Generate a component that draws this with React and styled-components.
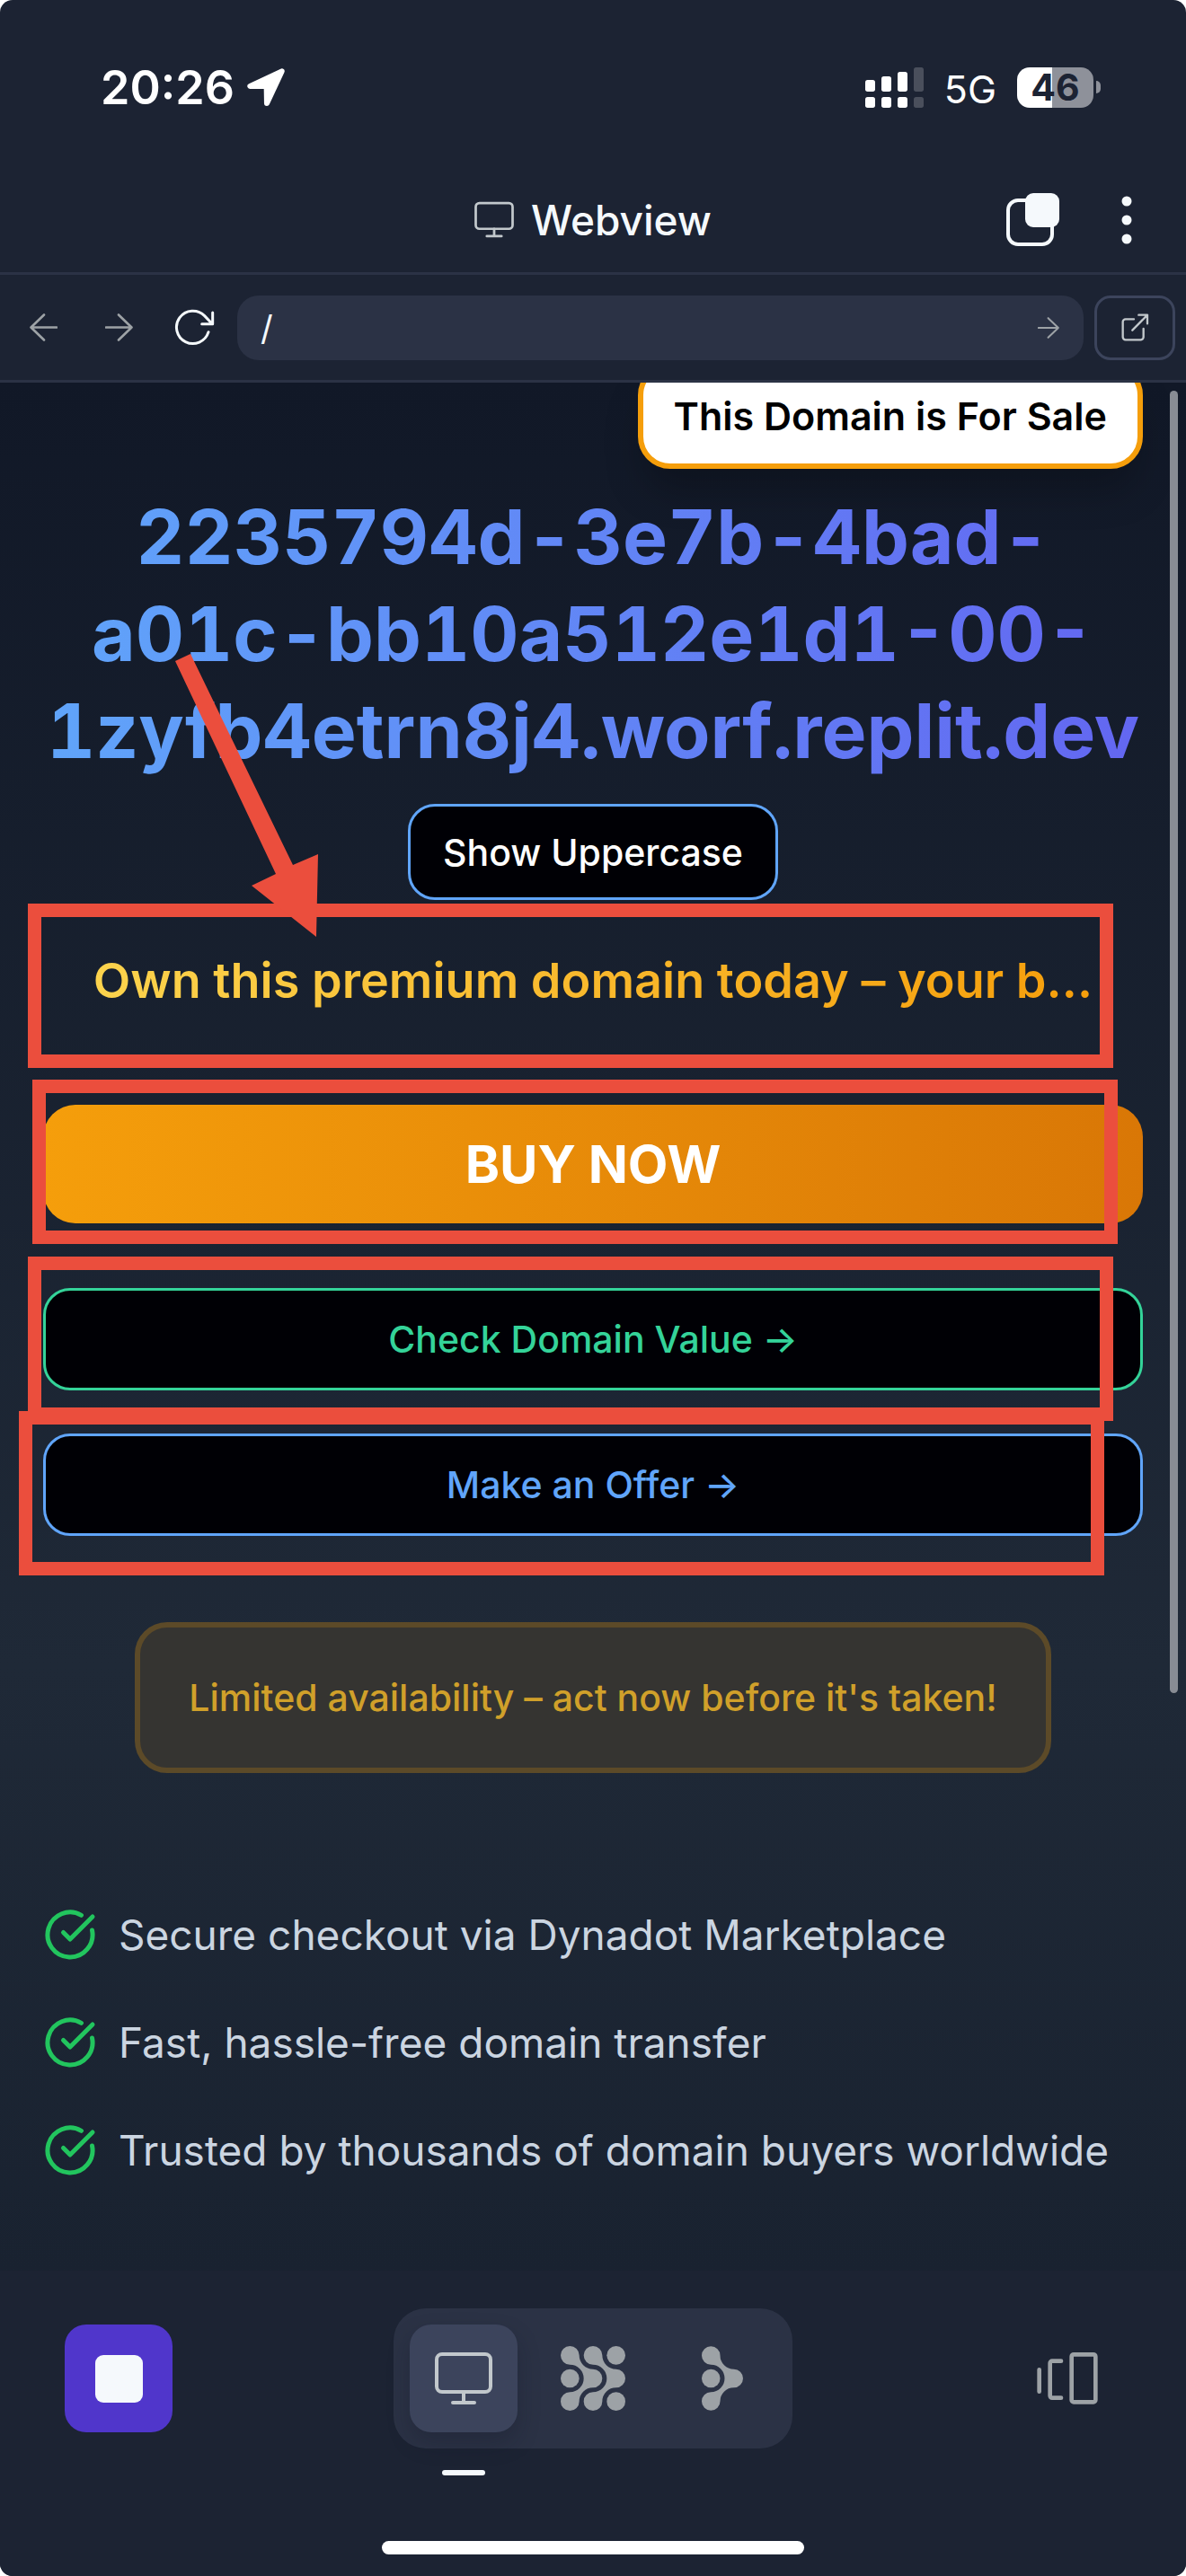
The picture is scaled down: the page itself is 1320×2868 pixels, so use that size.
import React from 'react';
import styled, { createGlobalStyle, css } from 'styled-components';
import { CircleCheckBig } from 'lucide-react';

const c = {
  chrome: '#1c2333',
  raised: '#2b3245',
  line: '#3c445c',
  icon: '#c2c8cc',
  muted: '#9da2a6',
  text: '#f5f9fc',
  blue: '#60a5fa',
  green: '#34d399',
  amber: '#f59e0b',
};

const GlobalStyle = createGlobalStyle`
  *, *::before, *::after { box-sizing: border-box; }
  body { margin: 0; background: #fff; font-family: Inter, Roboto, sans-serif; }
  button, input { font: inherit; }
  svg { display: block; flex: none; }
`;

const Screen = styled.div`
  min-height: 100vh;
  display: flex;
  flex-direction: column;
  background: ${c.chrome};
  color: ${c.text};
  border-radius: 14px;
  overflow: hidden;
`;

const StatusBar = styled.div`
  height: 186px;
  padding: 8px 95px 0 112px;
  display: flex;
  align-items: center;
  justify-content: space-between;
  color: #fff;
`;

const StatusGroup = styled.div`
  display: flex;
  align-items: center;
  gap: ${(p) => p.$gap}px;
`;

const Clock = styled.time`
  font-size: 52px;
  font-weight: 600;
`;

const Network = styled.span`
  font-size: 43px;
  font-weight: 400;
  padding-top: 4px;
`;

const Battery = styled.div`
  display: flex;
  align-items: center;
  gap: 3px;
`;

const BatteryBody = styled.span`
  width: 85px;
  height: 45px;
  border-radius: 14px;
  display: flex;
  align-items: center;
  justify-content: center;
  background: linear-gradient(90deg, #fff 46%, #8e919a 46%);
  color: ${c.chrome};
  font-size: 41px;
  font-weight: 700;
`;

const BatteryTip = styled.span`
  width: 5px;
  height: 14px;
  border-radius: 0 7px 7px 0;
  background: #8e919a;
`;

const IconButton = styled.button`
  border: 0;
  padding: 0;
  background: none;
  color: ${(p) => p.$color || c.text};
  width: ${(p) => p.$width}px;
  height: ${(p) => p.$height || 72}px;
  display: flex;
  align-items: center;
  justify-content: center;
`;

const TitleBar = styled.header`
  height: 120px;
  padding: 0 36px;
  display: grid;
  grid-template-columns: 1fr auto 1fr;
  align-items: center;
  border-bottom: 3px solid ${c.raised};
`;

const Title = styled.h1`
  grid-column: 2;
  margin: 0;
  display: flex;
  align-items: center;
  gap: 19px;
  font-size: 46px;
  font-weight: 500;
  svg { color: ${c.icon}; }
`;

const TitleActions = styled.div`
  display: flex;
  justify-content: flex-end;
  gap: 45px;
`;

const BrowserBar = styled.form`
  height: 120px;
  padding: 0 12px 0 6px;
  display: flex;
  align-items: center;
  border-bottom: 3px solid ${c.raised};
`;

const AddressBox = styled.div`
  flex: 1;
  height: 72px;
  margin: 0 12px 0 6px;
  padding: 0 3px 0 26px;
  display: flex;
  align-items: center;
  border-radius: 24px;
  background: ${c.raised};
`;

const AddressInput = styled.input`
  flex: 1;
  min-width: 0;
  padding: 0;
  border: 0;
  outline: 0;
  background: none;
  color: ${c.text};
  font-size: 38px;
`;

const OpenLink = styled.a`
  width: 90px;
  height: 72px;
  display: flex;
  align-items: center;
  justify-content: center;
  border: 3px solid ${c.line};
  border-radius: 18px;
  color: ${c.icon};
`;

const Page = styled.main`
  flex: 1;
  position: relative;
  overflow: hidden;
  padding: 0 48px 96px;
  display: flex;
  flex-direction: column;
  align-items: center;
  background: linear-gradient(180deg, #111827 0%, #1f2937 68%, #192230 100%);
`;

const SaleBadge = styled.div`
  align-self: flex-end;
  height: 118px;
  margin-top: -22px;
  padding: 0 34px;
  display: flex;
  align-items: center;
  border: 6px solid ${c.amber};
  border-radius: 36px;
  background: #fff;
  box-shadow: 0 30px 45px -9px rgba(0, 0, 0, 0.25);
  color: #000;
  font-size: 43px;
  font-weight: 600;
  white-space: nowrap;
`;

const Domain = styled.h2`
  align-self: stretch;
  margin: 22px -6px 27px;
  background: linear-gradient(90deg, ${c.blue}, #6366f1);
  background-clip: text;
  color: transparent;
  font-size: 84px;
  line-height: 108px;
  font-weight: 700;
  font-variant-numeric: tabular-nums;
  text-align: center;
  span { display: block; white-space: nowrap; }
`;

const actionTones = {
  outline: css`
    height: 114px;
    border: 3px solid ${(p) => p.$tone};
    border-radius: 30px;
    background: #000005;
    color: ${(p) => p.$text || p.$tone};
    font-size: 41px;
    font-weight: 500;
  `,
  primary: css`
    height: 132px;
    border: 0;
    border-radius: 36px;
    background: linear-gradient(90deg, ${c.amber}, #d97706);
    color: #fff;
    font-size: 58px;
    font-weight: 700;
  `,
};

const Action = styled.button`
  width: 100%;
  padding: 0;
  ${(p) => actionTones[p.$kind]}
`;

const CaseToggle = styled(Action)`
  width: auto;
  height: 107px;
  padding: 0 36px;
`;

const Actions = styled.div`
  width: 100%;
  margin-top: 102px;
  display: flex;
  flex-direction: column;
  gap: 48px;
  & > :first-child { margin-bottom: 24px; }
`;

const Slogan = styled.p`
  margin: 54px 0 0;
  background: linear-gradient(90deg, #fcd34d, ${c.amber});
  background-clip: text;
  color: transparent;
  font-size: 54px;
  line-height: 72px;
  font-weight: 600;
  white-space: nowrap;
`;

const Notice = styled.p`
  height: 168px;
  margin: 96px 0 150px;
  padding: 0 54px;
  display: flex;
  align-items: center;
  border: 6px solid #5c4a28;
  border-radius: 36px;
  background: #353431;
  color: #d0a02a;
  font-size: 41px;
  font-weight: 500;
  white-space: nowrap;
`;

const Benefits = styled.ul`
  align-self: stretch;
  margin: 0;
  padding: 0;
  list-style: none;
  display: flex;
  flex-direction: column;
  gap: 60px;
`;

const Benefit = styled.li`
  height: 60px;
  display: flex;
  align-items: center;
  gap: 24px;
  color: #cbd5e1;
  font-size: 46px;
  white-space: nowrap;
  svg { color: #22c55e; }
`;

const ScrollThumb = styled.div`
  position: absolute;
  top: 9px;
  right: 9px;
  width: 9px;
  height: 69%;
  border-radius: 5px;
  background: #888c94;
`;

const Markup = styled.svg`
  position: absolute;
  top: 0;
  left: 0;
  width: 100%;
  pointer-events: none;
`;

const Dock = styled.footer`
  padding: 42px 72px 24px;
  display: flex;
  flex-direction: column;
  align-items: center;
  background: ${c.chrome};
`;

const DockRow = styled.div`
  width: 100%;
  display: flex;
  align-items: center;
  justify-content: space-between;
`;

const StopButton = styled.button`
  width: 120px;
  height: 120px;
  padding: 0;
  display: grid;
  place-items: center;
  border: 0;
  border-radius: 24px;
  background: #5036cb;
`;

const StopMark = styled.span`
  width: 53px;
  height: 53px;
  border-radius: 9px;
  background: ${c.text};
`;

const Tabs = styled.nav`
  padding: 18px;
  display: flex;
  gap: 24px;
  border-radius: 36px;
  background: ${c.raised};
`;

const Tab = styled.button`
  position: relative;
  width: 120px;
  height: 120px;
  padding: 0;
  display: grid;
  place-items: center;
  border: 0;
  border-radius: 24px;
  background: none;
  color: ${c.muted};
  ${(p) =>
    p.$active &&
    css`
      background: ${c.line};
      color: ${c.icon};
      box-shadow: 0 12px 24px rgba(14, 21, 37, 0.25);
      &::after {
        content: '';
        position: absolute;
        top: 162px;
        left: 36px;
        width: 48px;
        height: 6px;
        border-radius: 3px;
        background: ${c.text};
      }
    `}
`;

const HomeIndicator = styled.div`
  width: 470px;
  height: 15px;
  margin-top: 103px;
  border-radius: 8px;
  background: #fff;
`;

const LocationIcon = () => (
  <svg width="42" height="42" viewBox="550 82 124 124" aria-hidden="true">
    <path d="M664 92 560 141h54l1 56Z" fill="currentColor" stroke="currentColor" strokeWidth="18" strokeLinejoin="round" />
  </svg>
);

const SignalIcon = () => (
  <svg width="65" height="45" viewBox="0 0 195 135" fill="#fff" aria-hidden="true">
    {[42, 30, 15, 0].map((top, i) => (
      <g key={top} opacity={i === 3 ? 0.2 : 1}>
        <rect x={i * 54} y={top} width="33" height={81 - top} rx="8" />
        <rect x={i * 54} y="99" width="33" height="36" rx="8" />
      </g>
    ))}
  </svg>
);

const MonitorIcon = ({ width, height }) => (
  <svg width={width} height={height} viewBox="0 0 64 60" fill="none" stroke="currentColor" strokeWidth="4" strokeLinecap="round" aria-hidden="true">
    <rect x="2" y="3" width="60" height="42" rx="6" />
    <path d="M32 45v12M20 57h24" />
  </svg>
);

const TabsIcon = () => (
  <svg width="59" height="59" viewBox="0 0 59 59" aria-hidden="true">
    <rect x="2" y="8" width="49" height="49" rx="11" fill="none" stroke="currentColor" strokeWidth="4" />
    <rect x="21" y="0" width="38" height="38" rx="9" fill="currentColor" />
  </svg>
);

const MoreIcon = () => (
  <svg width="12" height="54" viewBox="0 0 12 54" fill="currentColor" aria-hidden="true">
    <circle cx="6" cy="6" r="5.5" />
    <circle cx="6" cy="27" r="5.5" />
    <circle cx="6" cy="48" r="5.5" />
  </svg>
);

const ArrowIcon = ({ size, back }) => (
  <svg width={size} height={size} viewBox="0 0 31 31" fill="none" stroke="currentColor" strokeWidth="2.6" strokeLinecap="round" strokeLinejoin="round" aria-hidden="true">
    <path d={back ? 'M30 15.500H1.500M16 1.500 1.500 15.500 16 29.500' : 'M1 15.500h28.500M15 1.500l14.500 14L15 29.500'} />
  </svg>
);

const ReloadIcon = () => (
  <svg width="45" height="41" viewBox="586 134 135 123" fill="none" stroke="currentColor" strokeWidth="9" strokeLinecap="round" strokeLinejoin="round" aria-hidden="true">
    <path d="M700 211A54.500 54.500 0 1 1 687 157L713 184M714 146v38h-36" />
  </svg>
);

const ExternalIcon = () => (
  <svg width="31" height="31" viewBox="443 149 93 93" fill="none" stroke="currentColor" strokeWidth="7" strokeLinecap="round" strokeLinejoin="round" aria-hidden="true">
    <path d="M485 168h-28a9 9 0 0 0-9 9v51a9 9 0 0 0 9 9h51a9 9 0 0 0 9-9v-28M501 154h29v29M530 154l-50 51" />
  </svg>
);

const BRANCH =
  'M31 62A31 31 0 1 1 62 31A46 46 0 0 0 108 77A31 31 0 0 1 108 139A46 46 0 0 0 62 185A31 31 0 1 1 31 154A46 46 0 0 0 31 62Z';

const AgentIcon = () => (
  <svg width="72" height="72" viewBox="0 0 216 216" fill="currentColor" aria-hidden="true">
    <path d={BRANCH} />
    <path d={BRANCH} transform="translate(77 0)" />
    <circle cx="31" cy="108" r="31" />
    <circle cx="185" cy="31" r="31" />
    <circle cx="185" cy="185" r="31" />
  </svg>
);

const AssistantIcon = () => (
  <svg width="46" height="72" viewBox="0 0 139 216" fill="currentColor" aria-hidden="true">
    <path d={BRANCH} />
    <circle cx="31" cy="108" r="31" />
  </svg>
);

const DeckIcon = () => (
  <svg width="68" height="58" viewBox="222 117 204 174" fill="none" stroke="currentColor" strokeWidth="14" strokeLinecap="round" strokeLinejoin="round" aria-hidden="true">
    <path d="M230 175v73M303 146h-30a7 7 0 0 0-7 7v109a7 7 0 0 0 7 7h30" />
    <rect x="338" y="124" width="80" height="159" rx="7" />
  </svg>
);

const benefits = [
  'Secure checkout via Dynadot Marketplace',
  'Fast, hassle-free domain transfer',
  'Trusted by thousands of domain buyers worldwide',
];

const frames = [
  [31, 580],
  [36, 776],
  [31, 973],
  [21, 1145],
];

export default function App() {
  return (
    <>
      <GlobalStyle />
      <Screen>
        <StatusBar>
          <StatusGroup $gap={14}>
            <Clock>20:26</Clock>
            <LocationIcon />
          </StatusGroup>
          <StatusGroup $gap={23}>
            <SignalIcon />
            <Network>5G</Network>
            <Battery>
              <BatteryBody>46</BatteryBody>
              <BatteryTip />
            </Battery>
          </StatusGroup>
        </StatusBar>

        <TitleBar>
          <Title>
            <MonitorIcon width={44} height={41} />
            Webview
          </Title>
          <TitleActions>
            <IconButton type="button" aria-label="Tabs" $width={60}>
              <TabsIcon />
            </IconButton>
            <IconButton type="button" aria-label="More" $width={60}>
              <MoreIcon />
            </IconButton>
          </TitleActions>
        </TitleBar>

        <BrowserBar onSubmit={(e) => e.preventDefault()}>
          <IconButton type="button" aria-label="Back" $width={84} $color={c.muted}>
            <ArrowIcon size={31} back />
          </IconButton>
          <IconButton type="button" aria-label="Forward" $width={84} $color={c.muted}>
            <ArrowIcon size={31} />
          </IconButton>
          <IconButton type="button" aria-label="Reload" $width={84}>
            <ReloadIcon />
          </IconButton>
          <AddressBox>
            <AddressInput aria-label="Address" defaultValue="/" />
            <IconButton type="submit" aria-label="Go" $width={72} $color={c.muted}>
              <ArrowIcon size={24} />
            </IconButton>
          </AddressBox>
          <OpenLink href="#" aria-label="Open in new tab">
            <ExternalIcon />
          </OpenLink>
        </BrowserBar>

        <Page>
          <SaleBadge>This Domain is For Sale</SaleBadge>
          <Domain>
            <span>2235794d-3e7b-4bad-</span>
            <span>a01c-bb10a512e1d1-00-</span>
            <span>1zyfb4etrn8j4.worf.replit.dev</span>
          </Domain>
          <CaseToggle type="button" $kind="outline" $tone={c.blue} $text="#fff">
            Show Uppercase
          </CaseToggle>
          <Slogan>Own this premium domain today – your b…</Slogan>
          <Actions>
            <Action type="button" $kind="primary">BUY NOW</Action>
            <Action type="button" $kind="outline" $tone={c.green}>Check Domain Value →</Action>
            <Action type="button" $kind="outline" $tone={c.blue}>Make an Offer →</Action>
          </Actions>
          <Notice>Limited availability – act now before it's taken!</Notice>
          <Benefits>
            {benefits.map((text) => (
              <Benefit key={text}>
                <CircleCheckBig size={60} strokeWidth={2} aria-hidden="true" />
                {text}
              </Benefit>
            ))}
          </Benefits>
          <ScrollThumb />
          <Markup viewBox="0 0 1320 1400" aria-hidden="true">
            <g fill="none" stroke="#eb4e3d" strokeWidth="15">
              {frames.map(([x, y]) => (
                <rect key={y} x={x + 7.5} y={y + 7.5} width="1193" height="168" />
              ))}
            </g>
            <path fill="#eb4e3d" d="M212 302 326 537 354 525 352 617 280 560 307 547 195 310Z" />
          </Markup>
        </Page>

        <Dock>
          <DockRow>
            <StopButton type="button" aria-label="Stop">
              <StopMark />
            </StopButton>
            <Tabs>
              <Tab type="button" aria-label="Webview" $active>
                <MonitorIcon width={64} height={60} />
              </Tab>
              <Tab type="button" aria-label="Agent">
                <AgentIcon />
              </Tab>
              <Tab type="button" aria-label="Assistant">
                <AssistantIcon />
              </Tab>
            </Tabs>
            <IconButton type="button" aria-label="All panes" $width={120} $height={120} $color={c.muted}>
              <DeckIcon />
            </IconButton>
          </DockRow>
          <HomeIndicator />
        </Dock>
      </Screen>
    </>
  );
}
